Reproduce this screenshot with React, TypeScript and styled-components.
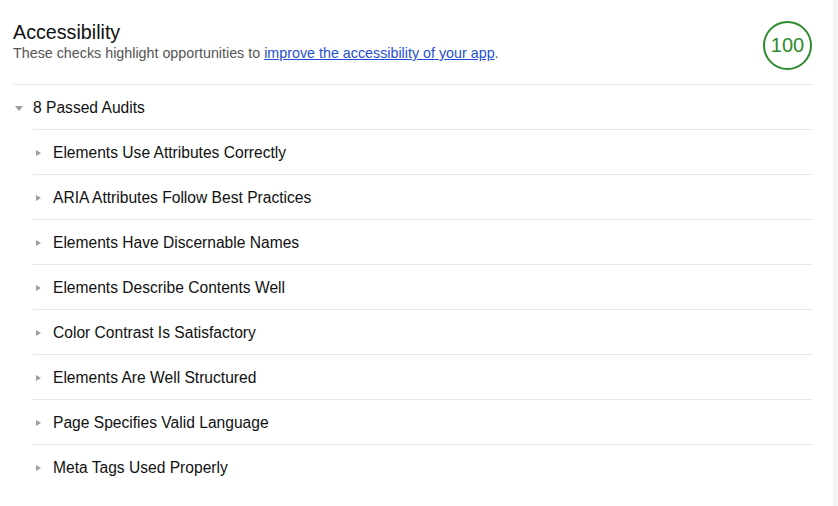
import React from "react";
import styled, { createGlobalStyle } from "styled-components";

const Global = createGlobalStyle`
  html, body { margin: 0; padding: 0; background: #fff; }
  body { font-family: "Liberation Sans", Arial, sans-serif; }
`;

const Page = styled.div`
  display: flex;
  width: 838px;
  height: 506px;
  overflow: hidden;
`;

const Main = styled.div`
  flex: 1;
  padding: 0 20px 0 13px;
  background: #fff;
`;

const Gutter = styled.div`
  width: 5px;
  background: #f3f3f3;
`;

const Header = styled.header`
  display: flex;
  justify-content: space-between;
  align-items: flex-start;
  padding-top: 20px;
  height: 85px;
  box-sizing: border-box;
  border-bottom: 1px solid #e8e8e8;
`;

const Title = styled.h1`
  margin: 0;
  font-size: 19.7px;
  font-weight: normal;
  color: #111;
  line-height: 24px;
`;

const Desc = styled.p`
  margin: 1px 0 0;
  font-size: 14.3px;
  color: #555;
  line-height: 17px;
`;

const Link = styled.a`
  color: #1f4fcf;
  text-decoration: underline;
`;

const Score = styled.div`
  width: 49px;
  height: 49px;
  box-sizing: border-box;
  border: 2px solid #2e8b2e;
  border-radius: 50%;
  color: #2e8b2e;
  font-size: 20px;
  display: flex;
  align-items: center;
  justify-content: center;
  margin: 1px 1px 0 0;
`;

const GroupHead = styled.div`
  display: flex;
  align-items: center;
  height: 44px;
  padding-top: 2px;
  box-sizing: border-box;
  font-size: 15.6px;
  color: #111;
`;

const Tri = styled.span<{ $open?: boolean }>`
  width: 0;
  height: 0;
  ${(p) =>
    p.$open
      ? `border-left: 4px solid transparent; border-right: 4px solid transparent; border-top: 5px solid #9e9e9e; margin: 0 10px 0 2px;`
      : `border-top: 3.5px solid transparent; border-bottom: 3.5px solid transparent; border-left: 5px solid #9e9e9e; margin: 0 12px 0 3px;`}
`;

const List = styled.div`
  padding-left: 20px;
`;

const Row = styled.div`
  display: flex;
  align-items: center;
  height: 45px;
  padding-top: 2px;
  font-size: 15.6px;
  color: #111;
  border-top: 1px solid #e8e8e8;
  box-sizing: border-box;
`;

const audits = [
  "Elements Use Attributes Correctly",
  "ARIA Attributes Follow Best Practices",
  "Elements Have Discernable Names",
  "Elements Describe Contents Well",
  "Color Contrast Is Satisfactory",
  "Elements Are Well Structured",
  "Page Specifies Valid Language",
  "Meta Tags Used Properly",
];

export default function App() {
  return (
    <Page>
      <Global />
      <Main>
        <Header>
          <div>
            <Title>Accessibility</Title>
            <Desc>
              These checks highlight opportunities to{" "}
              <Link href="#">improve the accessibility of your app</Link>.
            </Desc>
          </div>
          <Score>100</Score>
        </Header>
        <GroupHead>
          <Tri $open />
          8 Passed Audits
        </GroupHead>
        <List>
          {audits.map((a) => (
            <Row key={a}>
              <Tri />
              {a}
            </Row>
          ))}
        </List>
      </Main>
      <Gutter />
    </Page>
  );
}
